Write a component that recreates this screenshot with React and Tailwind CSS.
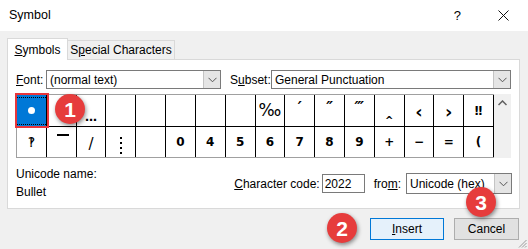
import React from "react";

const ROW1 = ["•", "", "…", "", "", "", "", "", "‰", "′", "″", "‴", "^", "‹", "›", "‼"];
const ROW2 = ["‽", "", "/", "", "", "0", "4", "5", "6", "7", "8", "9", "+", "−", "=", "("];

function Chevron() {
  return (
    <svg width="9" height="6" viewBox="0 0 9 6">
      <path d="M0.5 0.8 L4.5 4.8 L8.5 0.8" fill="none" stroke="#555" strokeWidth="1" />
    </svg>
  );
}

function Combo({ width, text }) {
  return (
    <div className={`flex h-[19px] items-stretch border border-[#7a7a7a] bg-white ${width}`}>
      <div className="flex flex-1 items-center pl-[3px] text-[12px] text-black">{text}</div>
      <div className="flex w-[17px] items-center justify-center border-l border-[#c4c4c4] bg-[#e5e5e5]">
        <Chevron />
      </div>
    </div>
  );
}

function Callout({ n, className }) {
  return (
    <div
      className={`absolute flex h-[30px] w-[30px] items-center justify-center rounded-full bg-[#e63c3c] text-[21px] font-bold leading-none text-white shadow-[1px_2px_4px_rgba(0,0,0,0.45)] ${className}`}
    >
      {n}
    </div>
  );
}

function cellClass(i) {
  // row 1 glyph placement
  if (i === 2) return "items-end pb-[3px]";
  if (i === 12) return "items-end pb-0 text-[10px]";
  if (i === 13 || i === 14) return "items-center pt-[3px] text-[18px]";
  if (i === 8) return "items-center text-[17px] font-normal";
  if (i >= 9 && i <= 11) return "items-start pt-[6px] text-[15px] italic";
  return "items-center";
}

export default function App() {
  return (
    <div className="relative h-[249px] w-[528px] overflow-hidden bg-[#f0f0f0] font-['Liberation_Sans',Arial,sans-serif] text-[12px] text-black">
      {/* TITLE BAR */}
      <div className="flex h-[31px] items-center bg-white pl-[9px] pr-[19px]">
        <span className="text-[12.5px]">Symbol</span>
        <span className="ml-auto mr-[37px] text-[13px]">?</span>
        <svg width="11" height="11" viewBox="0 0 11 11">
          <path d="M0.5 0.5 L10.5 10.5 M10.5 0.5 L0.5 10.5" stroke="#111" strokeWidth="1" />
        </svg>
      </div>

      <div className="pl-[7px] pr-[8px] pt-[7px]">
        {/* TABS */}
        <div className="flex h-[21px] items-end">
          <div className="relative z-10 -mb-px flex h-[22px] w-[61px] items-center justify-center border border-b-0 border-[#d9d9d9] bg-white">
            <span><span className="underline">S</span>ymbols</span>
          </div>
          <div className="flex h-[19px] w-[107px] items-center justify-center border border-b-0 border-l-0 border-[#d9d9d9] bg-[#f0f0f0]">
            <span>S<span className="underline">p</span>ecial Characters</span>
          </div>
        </div>

        {/* PANEL */}
        <div className="h-[150px] border border-[#d9d9d9] bg-white pl-[8px] pr-[7px] pt-[10px]">
          <div className="flex items-center">
            <span className="w-[30px]"><span className="underline">F</span>ont:</span>
            <Combo width="w-[175px]" text="(normal text)" />
            <span className="ml-[9px] w-[41px]">S<span className="underline">u</span>bset:</span>
            <Combo width="w-[240px]" text="General Punctuation" />
          </div>

          {/* GRID */}
          <div className="mt-[5px] flex">
            <div className="w-[478px] border-b border-l border-t border-[#a0a0a0]">
              <div className="grid grid-cols-[repeat(16,1fr)] gap-px border-r border-black bg-black font-['DejaVu_Sans',sans-serif] text-[12px] font-bold">
                {ROW1.map((ch, i) =>
                  i === 0 ? (
                    <div key={i} className="relative flex h-[31px] items-center justify-center bg-[#0078d7]">
                      <div className="absolute inset-x-0 top-[2px] border-t border-dotted border-black" />
                      <div className="absolute inset-x-0 bottom-[1px] border-t border-dotted border-black" />
                      <div className="h-[7px] w-[7px] rounded-full bg-white" />
                      <div className="absolute -left-[2px] -top-[2px] h-[35px] w-[34px] border-2 border-[#e8363b]" />
                    </div>
                  ) : (
                    <div key={i} className={`flex h-[31px] justify-center bg-white leading-none ${cellClass(i)}`}>
                      {ch}
                    </div>
                  )
                )}
                {ROW2.map((ch, i) => (
                  <div key={"b" + i} className="flex h-[30px] items-center justify-center bg-white">
                    {i === 1 ? (
                      <div className="mb-[14px] ml-[3px] h-[2px] w-[12px] bg-black" />
                    ) : i === 3 ? (
                      <div className="mt-[6px] flex flex-col gap-[3px]">
                        <div className="h-[2px] w-[2px] bg-black" />
                        <div className="h-[2px] w-[2px] bg-black" />
                        <div className="h-[2px] w-[2px] bg-black" />
                        <div className="h-[2px] w-[2px] bg-black" />
                      </div>
                    ) : i === 2 ? (
                      <span className="pt-[4px] text-[15px] font-normal">{ch}</span>
                    ) : i === 0 ? (
                      <span className="text-[14px] font-normal">{ch}</span>
                    ) : (
                      ch
                    )}
                  </div>
                ))}
              </div>
            </div>
            <div className="flex w-[17px] justify-center bg-[#f0f0f0] pt-[6px]">
              <svg width="9" height="6" viewBox="0 0 9 6">
                <path d="M0.5 5 L4.5 1 L8.5 5" fill="none" stroke="#606060" strokeWidth="1.5" />
              </svg>
            </div>
          </div>

          {/* BOTTOM INFO */}
          <div className="mt-[9px] flex items-start">
            <div className="flex flex-col gap-[4px] leading-[14px]">
              <span>Unicode name:</span>
              <span>Bullet</span>
            </div>
            <div className="ml-auto mt-[6px] flex h-[21px] items-center">
              <span className="mr-[2px]"><span className="underline">C</span>haracter code:</span>
              <div className="flex h-[19px] w-[43px] items-center border border-[#7a7a7a] pl-[2px]">2022</div>
              <span className="ml-[9px] mr-[5px]">fro<span className="underline">m</span>:</span>
              <div className="flex h-[21px] w-[106px] items-stretch border border-[#7a7a7a] bg-white">
                <div className="flex flex-1 items-center pl-[3px]">Unicode (hex)</div>
                <div className="flex w-[17px] items-center justify-center border-l border-[#c4c4c4] bg-[#e5e5e5]">
                  <Chevron />
                </div>
              </div>
            </div>
          </div>
        </div>

        {/* BUTTONS */}
        <div className="mt-[9px] flex justify-end gap-[10px] pr-[1px]">
          <div className="flex h-[22px] w-[74px] items-center justify-center border border-[#0078d7] bg-[#e5f1fb]">
            <span><span className="underline">I</span>nsert</span>
          </div>
          <div className="flex h-[22px] w-[65px] items-center justify-center border border-[#adadad] bg-[#e1e1e1]">
            Cancel
          </div>
        </div>
      </div>

      {/* RESIZE GRIP */}
      <svg className="absolute bottom-[1px] right-[1px]" width="9" height="9" viewBox="0 0 9 9">
        <path d="M8.5 1 L1 8.5 M8.5 4 L4 8.5 M8.5 7 L7 8.5" stroke="#9a9a9a" strokeWidth="1" />
      </svg>

      {/* CALLOUTS */}
      <Callout n="1" className="left-[55px] top-[94px]" />
      <Callout n="2" className="left-[327px] top-[213px]" />
      <Callout n="3" className="left-[466px] top-[187px]" />
    </div>
  );
}
